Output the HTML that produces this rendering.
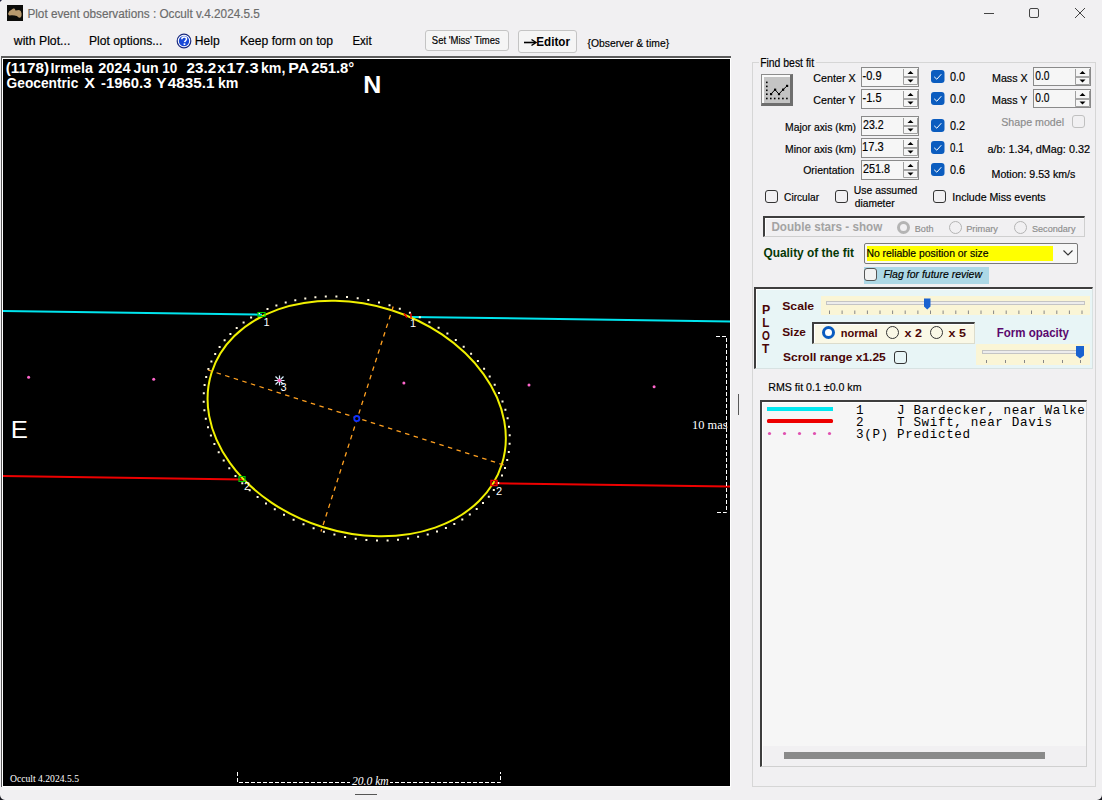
<!DOCTYPE html>
<html><head><meta charset="utf-8">
<style>
html,body{margin:0;padding:0;}
body{width:1102px;height:800px;overflow:hidden;position:relative;background:#f1f0f2;font-family:"Liberation Sans",sans-serif;color:#000;}
.a{position:absolute;}
.bgc{background:#f1f0f2;}
.inp{position:absolute;box-sizing:border-box;width:58px;height:20px;background:#f7f7f7;border:1px solid #7a7a7a;}
.spin{position:absolute;right:1px;top:1px;width:15px;height:16px;background:#ececec;border-left:1px solid #c0c0c0;}
.cb{position:absolute;box-sizing:border-box;width:13px;height:13px;border-radius:3px;}
.cbon{background:#0f5cbf;}
.cboff{border:1px solid #333;background:#f7f7f7;}
</style></head><body>
<!-- title bar -->
<svg class="a" style="left:7px;top:5px" width="16" height="16" viewBox="0 0 16 16">
<rect width="16" height="16" fill="#0c0c0a"/>
<path d="M1 9L2.2 6.3L4.5 4.8L6.2 3.5L7.8 3.8L8.5 5.5L10.2 5.2L12 5L13.8 6L14.6 8.5L14.5 11L13.5 12.5L12 12.8L9.8 11L7.5 10.5L5 10.3L2.2 10.5Z" fill="#b89a6e"/>
</svg>
<svg class="a" style="left:980px;top:4px" width="110" height="20">
<line x1="4" y1="9.5" x2="14" y2="9.5" stroke="#444" stroke-width="1"/>
<rect x="49.5" y="4.5" width="9" height="9" rx="1.5" fill="none" stroke="#444" stroke-width="1"/>
<path d="M95 4L105 14M105 4L95 14" stroke="#444" stroke-width="1"/>
</svg>
<!-- menu bar -->
<svg class="a" style="left:176px;top:33px" width="16" height="16" viewBox="0 0 16 16">
<circle cx="8" cy="8" r="6.8" fill="#fff" stroke="#1a2a80" stroke-width="1.2"/>
<circle cx="8" cy="8" r="5.2" fill="#1848d8"/>
<path d="M5.8 6.3C5.8 4.6 7 3.9 8.2 3.9C9.6 3.9 10.5 4.8 10.5 6C10.5 7.4 8.8 7.8 8.5 9.2" fill="none" stroke="#fff" stroke-width="1.5"/>
<rect x="7.6" y="10.3" width="1.7" height="1.7" fill="#fff"/>
</svg>
<div class="a" style="left:425px;top:30px;width:84px;height:21px;box-sizing:border-box;border:1px solid #c4c4c4;border-radius:3px;background:#f5f5f5;"></div>
<div class="a" style="left:518px;top:30px;width:59px;height:23px;box-sizing:border-box;border:1px solid #c4c4c4;border-radius:3px;background:#f5f5f5;"></div>
<svg class="a" style="left:523px;top:38px" width="15" height="9"><path d="M1 4.5H12" stroke="#000" stroke-width="1.6"/><path d="M8.5 1.5L13 4.5L8.5 7.5" fill="none" stroke="#000" stroke-width="1.5"/></svg>
<svg class="a" style="left:0;top:0" width="1102" height="800"><path d="M0 0H2L0 2Z" fill="#202040"/><path d="M0 800V795Q0.5 799.5 5 800Z" fill="#181820"/><path d="M1102 800V795Q1101.5 799.5 1097 800Z" fill="#181820"/></svg>
<!-- plot frame -->
<div class="a" style="left:1px;top:56px;width:730px;height:2px;background:#5c5c5c;"></div>
<div class="a" style="left:1px;top:56px;width:1px;height:731px;background:#5c5c5c;"></div>
<div class="a" style="left:2px;top:58px;width:729px;height:729px;background:#fff;"></div>
<div class="a" style="left:3px;top:59px;width:727px;height:727px;background:#000;"></div>
<div class="a" style="left:2px;top:787px;width:729px;height:3px;background:#f6f6f6;"></div>
<div class="a" style="left:355px;top:794px;width:22px;height:1px;background:#555;"></div>

<svg class="a" style="left:3px;top:59px" width="727" height="727" viewBox="3 59 727 727">
<g stroke-width="2" fill="none">
<line x1="3" y1="311" x2="262" y2="314.7" stroke="#00e5ee"/>
<line x1="411" y1="316.9" x2="730" y2="321.5" stroke="#00e5ee"/>
<line x1="3" y1="476" x2="243" y2="479.5" stroke="#ee0000"/>
<line x1="494" y1="483.2" x2="730" y2="486.6" stroke="#ee0000"/>
</g>
<ellipse cx="356.7" cy="418.5" rx="152.2" ry="113.8" transform="rotate(17.5 356.7 418.5)" fill="none" stroke="#f0f000" stroke-width="2"/>
<path d="M504.0 467.0h2v2h-2zM501.0 474.6h2v2h-2zM497.2 482.0h2v2h-2zM492.8 489.1h2v2h-2zM487.8 495.8h2v2h-2zM482.0 502.1h2v2h-2zM475.7 508.1h2v2h-2zM468.8 513.5h2v2h-2zM461.3 518.6h2v2h-2zM453.3 523.1h2v2h-2zM444.9 527.1h2v2h-2zM436.0 530.6h2v2h-2zM426.7 533.5h2v2h-2zM417.1 535.8h2v2h-2zM407.1 537.6h2v2h-2zM397.0 538.8h2v2h-2zM386.6 539.4h2v2h-2zM376.0 539.4h2v2h-2zM365.4 538.9h2v2h-2zM354.7 537.7h2v2h-2zM344.1 535.9h2v2h-2zM333.4 533.6h2v2h-2zM322.9 530.7h2v2h-2zM312.6 527.2h2v2h-2zM302.5 523.2h2v2h-2zM292.6 518.7h2v2h-2zM283.0 513.7h2v2h-2zM273.8 508.3h2v2h-2zM265.0 502.4h2v2h-2zM256.6 496.0h2v2h-2zM248.7 489.3h2v2h-2zM241.3 482.3h2v2h-2zM234.5 474.9h2v2h-2zM228.3 467.3h2v2h-2zM222.7 459.4h2v2h-2zM217.7 451.3h2v2h-2zM213.4 443.0h2v2h-2zM209.9 434.6h2v2h-2zM207.0 426.2h2v2h-2zM204.8 417.7h2v2h-2zM203.4 409.2h2v2h-2zM202.7 400.7h2v2h-2zM202.8 392.3h2v2h-2zM203.6 384.0h2v2h-2zM205.2 375.9h2v2h-2zM207.4 368.0h2v2h-2zM210.4 360.4h2v2h-2zM214.2 353.0h2v2h-2zM218.6 345.9h2v2h-2zM223.6 339.2h2v2h-2zM229.4 332.9h2v2h-2zM235.7 326.9h2v2h-2zM242.6 321.5h2v2h-2zM250.1 316.4h2v2h-2zM258.1 311.9h2v2h-2zM266.5 307.9h2v2h-2zM275.4 304.4h2v2h-2zM284.7 301.5h2v2h-2zM294.3 299.2h2v2h-2zM304.3 297.4h2v2h-2zM314.4 296.2h2v2h-2zM324.8 295.6h2v2h-2zM335.4 295.6h2v2h-2zM346.0 296.1h2v2h-2zM356.7 297.3h2v2h-2zM367.3 299.1h2v2h-2zM378.0 301.4h2v2h-2zM388.5 304.3h2v2h-2zM398.8 307.8h2v2h-2zM408.9 311.8h2v2h-2zM418.8 316.3h2v2h-2zM428.4 321.3h2v2h-2zM437.6 326.7h2v2h-2zM446.4 332.6h2v2h-2zM454.8 339.0h2v2h-2zM462.7 345.7h2v2h-2zM470.1 352.7h2v2h-2zM476.9 360.1h2v2h-2zM483.1 367.7h2v2h-2zM488.7 375.6h2v2h-2zM493.7 383.7h2v2h-2zM498.0 392.0h2v2h-2zM501.5 400.4h2v2h-2zM504.4 408.8h2v2h-2zM506.6 417.3h2v2h-2zM508.0 425.8h2v2h-2zM508.7 434.3h2v2h-2zM508.6 442.7h2v2h-2zM507.8 451.0h2v2h-2zM506.2 459.1h2v2h-2z" fill="#fff8e0"/>
<g stroke="#ffa020" stroke-width="1.3" stroke-dasharray="4.5 4.5" fill="none">
<line x1="208" y1="370" x2="505.5" y2="465.5"/>
<line x1="393.2" y1="306.5" x2="321" y2="531.5"/>
</g>
<circle cx="356.8" cy="418.6" r="2.6" fill="#000" stroke="#1030ff" stroke-width="1.8"/>
<circle cx="28.6" cy="377.3" r="1.5" fill="#ff66cc"/>
<circle cx="153.7" cy="379.2" r="1.5" fill="#ff66cc"/>
<circle cx="403.9" cy="383.0" r="1.5" fill="#ff66cc"/>
<circle cx="529.0" cy="384.9" r="1.5" fill="#ff66cc"/>
<circle cx="654.1" cy="386.8" r="1.5" fill="#ff66cc"/>
<g stroke="#d8f0ff" stroke-width="1.5"><path d="M275.5 376.5L283.5 384.5M283.5 376.5L275.5 384.5M279.5 375.5V385.5M274.5 380.5H284.5" stroke-width="1.2"/></g>
<circle cx="279.5" cy="380.5" r="1.8" fill="#ff50b0"/>
<path d="M258 312.5h7v4h-7z" fill="none" stroke="#00cc00" stroke-width="1.2"/>
<path d="M404 313.5l3 4M411 313.5v5" stroke="#ee0000" stroke-width="1.5"/>
<path d="M239 476.5h6v5h-6z" fill="none" stroke="#00cc00" stroke-width="1.2"/>
<path d="M491 480.5h6v5h-6z" fill="none" stroke="#ee0000" stroke-width="1.5"/>
<g font-family="Liberation Sans" font-size="11" fill="#fff">
<text x="263.5" y="326">1</text>
<text x="410" y="326.5">1</text>
<text x="280.5" y="391">3</text>
<text x="244" y="490">2</text>
<text x="496" y="494.5">2</text>
</g>
<path d="M716 336.5H726.5V512.5H716" fill="none" stroke="#fff" stroke-width="1" stroke-dasharray="4 2"/>
<path d="M237.5 772V782.5H500.5V772" fill="none" stroke="#fff" stroke-width="1" stroke-dasharray="4 2"/>
<rect x="350" y="776" width="40" height="9" fill="#000"/>
<rect x="690" y="419" width="36" height="12" fill="#000"/>
</svg>
<div class="a" style="left:738px;top:394px;width:1px;height:21px;background:#5a5a5a;"></div>
<div class="a" style="left:752px;top:62px;width:344px;height:725px;box-sizing:border-box;border:1px solid #d6d6d6;"></div>
<div class="a bgc" style="left:759px;top:56px;width:57px;height:12px;"></div>
<div class="a" style="left:761px;top:74px;width:32px;height:32px;box-sizing:border-box;background:#c4c4c4;border-top:1px solid #8c8c8c;border-left:1px solid #8c8c8c;border-right:3px solid #6e6e6e;border-bottom:3px solid #6e6e6e;box-shadow:inset 2px 2px 0 #fafafa;"></div>
<svg class="a" style="left:761px;top:74px" width="32" height="32"><g fill="#000">
<rect x="5" y="7.6" width="1.6" height="1.6"/>
<rect x="5" y="11.6" width="1.6" height="1.6"/>
<rect x="5" y="15.5" width="1.6" height="1.6"/>
<rect x="5" y="19.4" width="1.6" height="1.6"/>
<rect x="5.0" y="23.7" width="1.6" height="1.6"/>
<rect x="9.0" y="23.7" width="1.6" height="1.6"/>
<rect x="12.9" y="23.7" width="1.6" height="1.6"/>
<rect x="17.0" y="23.7" width="1.6" height="1.6"/>
<rect x="21.1" y="23.7" width="1.6" height="1.6"/>
<rect x="25.1" y="23.7" width="1.6" height="1.6"/>
</g><path d="M10 20L14 15.7L17.9 20L22 15.7L26 11.9" fill="none" stroke="#000" stroke-width="1"/>
<g fill="#000"><rect x="9" y="19" width="2.2" height="2.2"/><rect x="13" y="14.6" width="2.2" height="2.2"/><rect x="16.9" y="19" width="2.2" height="2.2"/><rect x="21" y="14.6" width="2.2" height="2.2"/><rect x="25" y="10.8" width="2.2" height="2.2"/></g></svg>
<div class="a" style="left:861px;top:67px;width:58px;height:20px;box-sizing:border-box;background:#f6f6f6;border:1px solid #8a8a8a;"></div>
<svg class="a" style="left:903px;top:69px" width="15" height="17">
<path d="M0.5 0V15.5H14.5V0" fill="none" stroke="#a0a0a0" stroke-width="1"/>
<rect x="1" y="7" width="13" height="2" fill="#a8a8a8"/>
<path d="M4.5 5L7.5 2L10.5 5Z" fill="#000"/><path d="M4.5 10.5H10.5L7.5 13.5Z" fill="#000"/>
</svg>
<div class="a" style="left:861px;top:89px;width:58px;height:20px;box-sizing:border-box;background:#f6f6f6;border:1px solid #8a8a8a;"></div>
<svg class="a" style="left:903px;top:91px" width="15" height="17">
<path d="M0.5 0V15.5H14.5V0" fill="none" stroke="#a0a0a0" stroke-width="1"/>
<rect x="1" y="7" width="13" height="2" fill="#a8a8a8"/>
<path d="M4.5 5L7.5 2L10.5 5Z" fill="#000"/><path d="M4.5 10.5H10.5L7.5 13.5Z" fill="#000"/>
</svg>
<div class="a" style="left:861px;top:116px;width:58px;height:20px;box-sizing:border-box;background:#f6f6f6;border:1px solid #8a8a8a;"></div>
<svg class="a" style="left:903px;top:118px" width="15" height="17">
<path d="M0.5 0V15.5H14.5V0" fill="none" stroke="#a0a0a0" stroke-width="1"/>
<rect x="1" y="7" width="13" height="2" fill="#a8a8a8"/>
<path d="M4.5 5L7.5 2L10.5 5Z" fill="#000"/><path d="M4.5 10.5H10.5L7.5 13.5Z" fill="#000"/>
</svg>
<div class="a" style="left:861px;top:138px;width:58px;height:20px;box-sizing:border-box;background:#f6f6f6;border:1px solid #8a8a8a;"></div>
<svg class="a" style="left:903px;top:140px" width="15" height="17">
<path d="M0.5 0V15.5H14.5V0" fill="none" stroke="#a0a0a0" stroke-width="1"/>
<rect x="1" y="7" width="13" height="2" fill="#a8a8a8"/>
<path d="M4.5 5L7.5 2L10.5 5Z" fill="#000"/><path d="M4.5 10.5H10.5L7.5 13.5Z" fill="#000"/>
</svg>
<div class="a" style="left:861px;top:160px;width:58px;height:20px;box-sizing:border-box;background:#f6f6f6;border:1px solid #8a8a8a;"></div>
<svg class="a" style="left:903px;top:162px" width="15" height="17">
<path d="M0.5 0V15.5H14.5V0" fill="none" stroke="#a0a0a0" stroke-width="1"/>
<rect x="1" y="7" width="13" height="2" fill="#a8a8a8"/>
<path d="M4.5 5L7.5 2L10.5 5Z" fill="#000"/><path d="M4.5 10.5H10.5L7.5 13.5Z" fill="#000"/>
</svg>
<div class="a" style="left:1033px;top:67px;width:58px;height:19px;box-sizing:border-box;background:#f6f6f6;border:1px solid #8a8a8a;"></div>
<svg class="a" style="left:1075px;top:69px" width="15" height="17">
<path d="M0.5 0V15.5H14.5V0" fill="none" stroke="#a0a0a0" stroke-width="1"/>
<rect x="1" y="7" width="13" height="2" fill="#a8a8a8"/>
<path d="M4.5 5L7.5 2L10.5 5Z" fill="#000"/><path d="M4.5 10.5H10.5L7.5 13.5Z" fill="#000"/>
</svg>
<div class="a" style="left:1033px;top:89px;width:58px;height:19px;box-sizing:border-box;background:#f6f6f6;border:1px solid #8a8a8a;"></div>
<svg class="a" style="left:1075px;top:91px" width="15" height="17">
<path d="M0.5 0V15.5H14.5V0" fill="none" stroke="#a0a0a0" stroke-width="1"/>
<rect x="1" y="7" width="13" height="2" fill="#a8a8a8"/>
<path d="M4.5 5L7.5 2L10.5 5Z" fill="#000"/><path d="M4.5 10.5H10.5L7.5 13.5Z" fill="#000"/>
</svg>
<svg class="a" style="left:931px;top:70px" width="14" height="14"><rect x="0" y="0" width="13.5" height="13" rx="3" fill="#0b5cbf"/><path d="M3.2 6.8L5.8 9.2L10.3 4.2" fill="none" stroke="#fff" stroke-width="1"/></svg>
<svg class="a" style="left:931px;top:92px" width="14" height="14"><rect x="0" y="0" width="13.5" height="13" rx="3" fill="#0b5cbf"/><path d="M3.2 6.8L5.8 9.2L10.3 4.2" fill="none" stroke="#fff" stroke-width="1"/></svg>
<svg class="a" style="left:931px;top:119px" width="14" height="14"><rect x="0" y="0" width="13.5" height="13" rx="3" fill="#0b5cbf"/><path d="M3.2 6.8L5.8 9.2L10.3 4.2" fill="none" stroke="#fff" stroke-width="1"/></svg>
<svg class="a" style="left:931px;top:141px" width="14" height="14"><rect x="0" y="0" width="13.5" height="13" rx="3" fill="#0b5cbf"/><path d="M3.2 6.8L5.8 9.2L10.3 4.2" fill="none" stroke="#fff" stroke-width="1"/></svg>
<svg class="a" style="left:931px;top:163px" width="14" height="14"><rect x="0" y="0" width="13.5" height="13" rx="3" fill="#0b5cbf"/><path d="M3.2 6.8L5.8 9.2L10.3 4.2" fill="none" stroke="#fff" stroke-width="1"/></svg>
<div class="a" style="left:1072px;top:115px;width:13px;height:13px;box-sizing:border-box;border:1px solid #c0c0c0;border-radius:3px;"></div>
<div class="a" style="left:765px;top:190px;width:13px;height:13px;box-sizing:border-box;border:1px solid #333;border-radius:3px;"></div>
<div class="a" style="left:835px;top:190px;width:13px;height:13px;box-sizing:border-box;border:1px solid #333;border-radius:3px;"></div>
<div class="a" style="left:933px;top:190px;width:13px;height:13px;box-sizing:border-box;border:1px solid #333;border-radius:3px;"></div>
<div class="a" style="left:763px;top:216px;width:322px;height:21px;box-sizing:border-box;border-top:2px solid #3e3e3e;border-left:2px solid #3e3e3e;border-right:1px solid #cfcfcf;border-bottom:1px solid #cfcfcf;box-shadow:inset 1px 1px 0 #fff;"></div>
<div class="a" style="left:897px;top:221px;width:13px;height:13px;box-sizing:border-box;border-radius:50%;border:3.5px solid #b4b4b4;"></div>
<div class="a" style="left:949px;top:221px;width:13px;height:13px;box-sizing:border-box;border-radius:50%;border:1px solid #b4b4b4;"></div>
<div class="a" style="left:1014px;top:221px;width:13px;height:13px;box-sizing:border-box;border-radius:50%;border:1px solid #b4b4b4;"></div>
<div class="a" style="left:864px;top:243px;width:214px;height:21px;box-sizing:border-box;border:1px solid #7a7a7a;border-radius:2px;background:#f7f7f7;"></div>
<div class="a" style="left:867px;top:246px;width:186px;height:15px;background:#ffff00;"></div>
<svg class="a" style="left:1062px;top:249px" width="12" height="8"><path d="M1.5 1.5L6 6L10.5 1.5" fill="none" stroke="#333" stroke-width="1.1"/></svg>
<div class="a" style="left:864px;top:267px;width:125px;height:17px;background:#add8e6;"></div>
<div class="a" style="left:864px;top:268px;width:13px;height:13px;box-sizing:border-box;border:1px solid #555;border-radius:3px;background:#f2f2f2;"></div>
<div class="a" style="left:754px;top:287px;width:339px;height:82px;box-sizing:border-box;border-top:2px solid #3e3e3e;border-left:2px solid #3e3e3e;border-right:1px solid #d8e2e2;border-bottom:1px solid #d8e2e2;box-shadow:inset 1px 1px 0 #fff;background:#e8f5f6;"></div>
<div class="a" style="left:821px;top:296px;width:269px;height:19px;background:#faf5d6;"></div>
<div class="a" style="left:826px;top:301px;width:259px;height:4px;box-sizing:border-box;border:1px solid #c4c4c4;background:#ececec;"></div>
<svg class="a" style="left:821px;top:296px" width="269" height="19">
<path d="M103 2.5h6.5v8l-3.25 3l-3.25-3z" fill="#1a62d0"/><g stroke="#888" stroke-width="1"><path d="
M8.5 14.5v3.5M21.1 14.5v3.5M33.8 14.5v3.5M46.4 14.5v3.5M59.0 14.5v3.5M71.6 14.5v3.5M84.2 14.5v3.5M96.9 14.5v3.5M109.5 14.5v3.5M122.1 14.5v3.5M134.8 14.5v3.5M147.4 14.5v3.5M160.0 14.5v3.5M172.6 14.5v3.5M185.2 14.5v3.5M197.9 14.5v3.5M210.5 14.5v3.5M223.1 14.5v3.5M235.8 14.5v3.5M248.4 14.5v3.5M261.0 14.5v3.5"/></g></svg>
<div class="a" style="left:812px;top:322px;width:163px;height:22px;box-sizing:border-box;border-top:2px solid #3e3e3e;border-left:2px solid #3e3e3e;border-right:1px solid #dcdccc;border-bottom:1px solid #dcdccc;box-shadow:inset 1px 1px 0 #fff;background:#faf8e6;"></div>
<div class="a" style="left:822px;top:326px;width:13px;height:13px;box-sizing:border-box;border-radius:50%;border:3.5px solid #0a5cc0;background:#fff;"></div>
<div class="a" style="left:886px;top:326px;width:13px;height:13px;box-sizing:border-box;border-radius:50%;border:1px solid #333;"></div>
<div class="a" style="left:930px;top:326px;width:13px;height:13px;box-sizing:border-box;border-radius:50%;border:1px solid #333;"></div>
<div class="a" style="left:976px;top:344px;width:114px;height:21px;background:#faf5d6;"></div>
<div class="a" style="left:982px;top:350px;width:100px;height:4px;box-sizing:border-box;border:1px solid #c4c4c4;background:#ececec;"></div>
<svg class="a" style="left:976px;top:344px" width="114" height="21"><path d="M100 2h8v9.5l-4 3l-4-3z" fill="#1a62d0"/>
<g stroke="#888" stroke-width="1"><path d="M10.5 16v3M29.5 16v3M48.5 16v3M67.5 16v3M86.5 16v3M104.5 16v3"/></g></svg>
<div class="a" style="left:894px;top:351px;width:13px;height:13px;box-sizing:border-box;border:1px solid #333;border-radius:3px;"></div>
<div class="a" style="left:760px;top:400px;width:327px;height:367px;box-sizing:border-box;border-top:2px solid #3e3e3e;border-left:2px solid #3e3e3e;border-right:1px solid #d0d0d0;border-bottom:1px solid #d0d0d0;box-shadow:inset 1px 1px 0 #fff;"></div>
<div class="a" style="left:763px;top:403px;width:323px;height:343px;background:#f6f6f6;overflow:hidden;">
<div class="a" style="left:4px;top:4px;width:66px;height:4px;background:#00e8f0;"></div>
<div class="a" style="left:4px;top:16px;width:66px;height:4px;background:#ee0000;border-radius:1.5px;"></div>
<svg class="a" style="left:4px;top:28px" width="70" height="6"><g fill="#e050b0"><circle cx="2.5" cy="2.5" r="1.6"/><circle cx="17.5" cy="2.5" r="1.6"/><circle cx="32.5" cy="2.5" r="1.6"/><circle cx="47.5" cy="2.5" r="1.6"/><circle cx="62.5" cy="2.5" r="1.6"/></g></svg>
<pre class="a" style="margin:0;left:93px;top:2px;font-family:'Liberation Mono',monospace;font-size:12.6px;letter-spacing:0.64px;line-height:12px;color:#000;">1    J Bardecker, near Walker
2    T Swift, near Davis
3(P) Predicted</pre>
</div>
<div class="a" style="left:784px;top:752px;width:261px;height:7px;background:#8a8a8a;"></div>
<svg class="a" style="left:0;top:0" width="1102" height="800">
<text x="27.40" y="17.70" font-family="Liberation Sans" font-size="12" font-weight="normal" font-style="normal" fill="#6b6b6b" stroke="#6b6b6b" stroke-width="0.18" xml:space="preserve" textLength="232.46" lengthAdjust="spacingAndGlyphs">Plot event observations : Occult v.4.2024.5.5</text>
<text x="13.79" y="45.00" font-family="Liberation Sans" font-size="12" font-weight="normal" font-style="normal" fill="#000" stroke="#000" stroke-width="0.18" xml:space="preserve" textLength="56.51" lengthAdjust="spacingAndGlyphs">with Plot...</text>
<text x="88.99" y="45.00" font-family="Liberation Sans" font-size="12" font-weight="normal" font-style="normal" fill="#000" stroke="#000" stroke-width="0.18" xml:space="preserve" textLength="73.34" lengthAdjust="spacingAndGlyphs">Plot options...</text>
<text x="194.77" y="45.00" font-family="Liberation Sans" font-size="12" font-weight="normal" font-style="normal" fill="#000" stroke="#000" stroke-width="0.18" xml:space="preserve" textLength="24.85" lengthAdjust="spacingAndGlyphs">Help</text>
<text x="239.99" y="45.00" font-family="Liberation Sans" font-size="12" font-weight="normal" font-style="normal" fill="#000" stroke="#000" stroke-width="0.18" xml:space="preserve" textLength="93.07" lengthAdjust="spacingAndGlyphs">Keep form on top</text>
<text x="352.39" y="45.00" font-family="Liberation Sans" font-size="12" font-weight="normal" font-style="normal" fill="#000" stroke="#000" stroke-width="0.18" xml:space="preserve" textLength="19.24" lengthAdjust="spacingAndGlyphs">Exit</text>
<text x="431.87" y="43.90" font-family="Liberation Sans" font-size="10.5" font-weight="normal" font-style="normal" fill="#000" stroke="#000" stroke-width="0.18" xml:space="preserve" textLength="67.88" lengthAdjust="spacingAndGlyphs">Set 'Miss' Times</text>
<text x="536.30" y="45.80" font-family="Liberation Sans" font-size="12.8" font-weight="bold" font-style="normal" fill="#000" xml:space="preserve" textLength="33.61" lengthAdjust="spacingAndGlyphs">Editor</text>
<text x="587.44" y="46.90" font-family="Liberation Sans" font-size="11.5" font-weight="normal" font-style="normal" fill="#000" stroke="#000" stroke-width="0.18" xml:space="preserve" textLength="81.69" lengthAdjust="spacingAndGlyphs">{Observer &amp; time}</text>
<text x="760.13" y="66.70" font-family="Liberation Sans" font-size="12" font-weight="normal" font-style="normal" fill="#000" stroke="#000" stroke-width="0.18" xml:space="preserve" textLength="53.90" lengthAdjust="spacingAndGlyphs">Find best fit</text>
<text x="813.21" y="81.50" font-family="Liberation Sans" font-size="11.8" font-weight="normal" font-style="normal" fill="#000" stroke="#000" stroke-width="0.18" xml:space="preserve" textLength="42.42" lengthAdjust="spacingAndGlyphs">Center X</text>
<text x="813.21" y="103.60" font-family="Liberation Sans" font-size="11.8" font-weight="normal" font-style="normal" fill="#000" stroke="#000" stroke-width="0.18" xml:space="preserve" textLength="42.22" lengthAdjust="spacingAndGlyphs">Center Y</text>
<text x="785.05" y="130.60" font-family="Liberation Sans" font-size="11.8" font-weight="normal" font-style="normal" fill="#000" stroke="#000" stroke-width="0.18" xml:space="preserve" textLength="70.96" lengthAdjust="spacingAndGlyphs">Major axis (km)</text>
<text x="785.05" y="152.70" font-family="Liberation Sans" font-size="11.8" font-weight="normal" font-style="normal" fill="#000" stroke="#000" stroke-width="0.18" xml:space="preserve" textLength="70.96" lengthAdjust="spacingAndGlyphs">Minor axis (km)</text>
<text x="803.22" y="173.50" font-family="Liberation Sans" font-size="11.8" font-weight="normal" font-style="normal" fill="#000" stroke="#000" stroke-width="0.18" xml:space="preserve" textLength="51.24" lengthAdjust="spacingAndGlyphs">Orientation</text>
<text x="862.61" y="79.80" font-family="Liberation Sans" font-size="12" font-weight="normal" font-style="normal" fill="#000" stroke="#000" stroke-width="0.18" xml:space="preserve" textLength="18.93" lengthAdjust="spacingAndGlyphs">-0.9</text>
<text x="862.61" y="102.00" font-family="Liberation Sans" font-size="12" font-weight="normal" font-style="normal" fill="#000" stroke="#000" stroke-width="0.18" xml:space="preserve" textLength="18.93" lengthAdjust="spacingAndGlyphs">-1.5</text>
<text x="863.06" y="129.00" font-family="Liberation Sans" font-size="12" font-weight="normal" font-style="normal" fill="#000" stroke="#000" stroke-width="0.18" xml:space="preserve" textLength="20.68" lengthAdjust="spacingAndGlyphs">23.2</text>
<text x="862.07" y="151.00" font-family="Liberation Sans" font-size="12" font-weight="normal" font-style="normal" fill="#000" stroke="#000" stroke-width="0.18" xml:space="preserve" textLength="21.67" lengthAdjust="spacingAndGlyphs">17.3</text>
<text x="863.08" y="173.00" font-family="Liberation Sans" font-size="12" font-weight="normal" font-style="normal" fill="#000" stroke="#000" stroke-width="0.18" xml:space="preserve" textLength="27.04" lengthAdjust="spacingAndGlyphs">251.8</text>
<text x="1035.28" y="80.30" font-family="Liberation Sans" font-size="12" font-weight="normal" font-style="normal" fill="#000" stroke="#000" stroke-width="0.18" xml:space="preserve" textLength="14.22" lengthAdjust="spacingAndGlyphs">0.0</text>
<text x="1035.28" y="102.00" font-family="Liberation Sans" font-size="12" font-weight="normal" font-style="normal" fill="#000" stroke="#000" stroke-width="0.18" xml:space="preserve" textLength="14.22" lengthAdjust="spacingAndGlyphs">0.0</text>
<text x="950.00" y="81.00" font-family="Liberation Sans" font-size="13" font-weight="normal" font-style="normal" fill="#000" stroke="#000" stroke-width="0.18" xml:space="preserve" textLength="15.07" lengthAdjust="spacingAndGlyphs">0.0</text>
<text x="950.00" y="103.00" font-family="Liberation Sans" font-size="13" font-weight="normal" font-style="normal" fill="#000" stroke="#000" stroke-width="0.18" xml:space="preserve" textLength="15.07" lengthAdjust="spacingAndGlyphs">0.0</text>
<text x="950.00" y="130.20" font-family="Liberation Sans" font-size="13" font-weight="normal" font-style="normal" fill="#000" stroke="#000" stroke-width="0.18" xml:space="preserve" textLength="15.07" lengthAdjust="spacingAndGlyphs">0.2</text>
<text x="950.00" y="152.00" font-family="Liberation Sans" font-size="13" font-weight="normal" font-style="normal" fill="#000" stroke="#000" stroke-width="0.18" xml:space="preserve" textLength="13.58" lengthAdjust="spacingAndGlyphs">0.1</text>
<text x="950.00" y="174.30" font-family="Liberation Sans" font-size="13" font-weight="normal" font-style="normal" fill="#000" stroke="#000" stroke-width="0.18" xml:space="preserve" textLength="15.07" lengthAdjust="spacingAndGlyphs">0.6</text>
<text x="992.00" y="82.00" font-family="Liberation Sans" font-size="11" font-weight="normal" font-style="normal" fill="#000" stroke="#000" stroke-width="0.18" xml:space="preserve" textLength="35.70" lengthAdjust="spacingAndGlyphs">Mass X</text>
<text x="992.00" y="104.00" font-family="Liberation Sans" font-size="11" font-weight="normal" font-style="normal" fill="#000" stroke="#000" stroke-width="0.18" xml:space="preserve" textLength="35.50" lengthAdjust="spacingAndGlyphs">Mass Y</text>
<text x="1001.26" y="125.50" font-family="Liberation Sans" font-size="11.8" font-weight="normal" font-style="normal" fill="#8c8c8c" stroke="#8c8c8c" stroke-width="0.18" xml:space="preserve" textLength="62.79" lengthAdjust="spacingAndGlyphs">Shape model</text>
<text x="987.40" y="152.90" font-family="Liberation Sans" font-size="10.5" font-weight="normal" font-style="normal" fill="#000" stroke="#000" stroke-width="0.18" xml:space="preserve" textLength="102.66" lengthAdjust="spacingAndGlyphs">a/b: 1.34, dMag: 0.32</text>
<text x="991.59" y="177.70" font-family="Liberation Sans" font-size="10.5" font-weight="normal" font-style="normal" fill="#000" stroke="#000" stroke-width="0.18" xml:space="preserve" textLength="83.79" lengthAdjust="spacingAndGlyphs">Motion: 9.53 km/s</text>
<text x="784.09" y="201.20" font-family="Liberation Sans" font-size="11.5" font-weight="normal" font-style="normal" fill="#000" stroke="#000" stroke-width="0.18" xml:space="preserve" textLength="34.98" lengthAdjust="spacingAndGlyphs">Circular</text>
<text x="853.80" y="194.20" font-family="Liberation Sans" font-size="10.5" font-weight="normal" font-style="normal" fill="#000" stroke="#000" stroke-width="0.18" xml:space="preserve" textLength="63.60" lengthAdjust="spacingAndGlyphs">Use assumed</text>
<text x="854.80" y="206.70" font-family="Liberation Sans" font-size="10.5" font-weight="normal" font-style="normal" fill="#000" stroke="#000" stroke-width="0.18" xml:space="preserve" textLength="39.75" lengthAdjust="spacingAndGlyphs">diameter</text>
<text x="952.29" y="201.20" font-family="Liberation Sans" font-size="11.5" font-weight="normal" font-style="normal" fill="#000" stroke="#000" stroke-width="0.18" xml:space="preserve" textLength="93.36" lengthAdjust="spacingAndGlyphs">Include Miss events</text>
<text x="771.42" y="230.90" font-family="Liberation Sans" font-size="12.5" font-weight="bold" font-style="normal" fill="#a3a3a3" xml:space="preserve" textLength="110.80" lengthAdjust="spacingAndGlyphs">Double stars - show</text>
<text x="914.81" y="231.80" font-family="Liberation Sans" font-size="9.5" font-weight="normal" font-style="normal" fill="#8f8f8f" stroke="#8f8f8f" stroke-width="0.18" xml:space="preserve" textLength="18.64" lengthAdjust="spacingAndGlyphs">Both</text>
<text x="966.22" y="231.80" font-family="Liberation Sans" font-size="9.5" font-weight="normal" font-style="normal" fill="#8f8f8f" stroke="#8f8f8f" stroke-width="0.18" xml:space="preserve" textLength="31.71" lengthAdjust="spacingAndGlyphs">Primary</text>
<text x="1032.01" y="231.80" font-family="Liberation Sans" font-size="9.5" font-weight="normal" font-style="normal" fill="#8f8f8f" stroke="#8f8f8f" stroke-width="0.18" xml:space="preserve" textLength="43.43" lengthAdjust="spacingAndGlyphs">Secondary</text>
<text x="763.38" y="257.20" font-family="Liberation Sans" font-size="12" font-weight="bold" font-style="normal" fill="#063806" xml:space="preserve" textLength="90.58" lengthAdjust="spacingAndGlyphs">Quality of the fit</text>
<text x="866.42" y="256.50" font-family="Liberation Sans" font-size="11" font-weight="normal" font-style="normal" fill="#000" stroke="#000" stroke-width="0.18" xml:space="preserve" textLength="122.06" lengthAdjust="spacingAndGlyphs">No reliable position or size</text>
<text x="883.38" y="278.10" font-family="Liberation Sans" font-size="11.5" font-weight="normal" font-style="italic" fill="#000" stroke="#000" stroke-width="0.18" xml:space="preserve" textLength="98.62" lengthAdjust="spacingAndGlyphs">Flag for future review</text>
<text x="762.00" y="313.50" font-family="Liberation Sans" font-size="12.3" font-weight="bold" font-style="normal" fill="#4a0606" xml:space="preserve" textLength="8.20" lengthAdjust="spacingAndGlyphs">P</text>
<text x="762.19" y="326.50" font-family="Liberation Sans" font-size="12.3" font-weight="bold" font-style="normal" fill="#4a0606" xml:space="preserve" textLength="7.11" lengthAdjust="spacingAndGlyphs">L</text>
<text x="762.00" y="339.50" font-family="Liberation Sans" font-size="12.3" font-weight="bold" font-style="normal" fill="#4a0606" xml:space="preserve" textLength="7.89" lengthAdjust="spacingAndGlyphs">O</text>
<text x="762.11" y="352.50" font-family="Liberation Sans" font-size="12.3" font-weight="bold" font-style="normal" fill="#4a0606" xml:space="preserve" textLength="7.31" lengthAdjust="spacingAndGlyphs">T</text>
<text x="782.19" y="309.50" font-family="Liberation Sans" font-size="11.8" font-weight="bold" font-style="normal" fill="#4a0606" xml:space="preserve" textLength="31.99" lengthAdjust="spacingAndGlyphs">Scale</text>
<text x="782.19" y="335.50" font-family="Liberation Sans" font-size="11.8" font-weight="bold" font-style="normal" fill="#4a0606" xml:space="preserve" textLength="23.73" lengthAdjust="spacingAndGlyphs">Size</text>
<text x="840.65" y="336.80" font-family="Liberation Sans" font-size="11.8" font-weight="bold" font-style="normal" fill="#4a0606" xml:space="preserve" textLength="36.87" lengthAdjust="spacingAndGlyphs">normal</text>
<text x="904.59" y="336.80" font-family="Liberation Sans" font-size="11.8" font-weight="bold" font-style="normal" fill="#4a0606" xml:space="preserve" textLength="17.43" lengthAdjust="spacingAndGlyphs">x 2</text>
<text x="948.60" y="336.80" font-family="Liberation Sans" font-size="11.8" font-weight="bold" font-style="normal" fill="#4a0606" xml:space="preserve" textLength="17.35" lengthAdjust="spacingAndGlyphs">x 5</text>
<text x="996.81" y="336.60" font-family="Liberation Sans" font-size="12.3" font-weight="bold" font-style="normal" fill="#5a086e" xml:space="preserve" textLength="72.22" lengthAdjust="spacingAndGlyphs">Form opacity</text>
<text x="782.99" y="361.20" font-family="Liberation Sans" font-size="11.8" font-weight="bold" font-style="normal" fill="#4a0606" xml:space="preserve" textLength="102.81" lengthAdjust="spacingAndGlyphs">Scroll range x1.25</text>
<text x="768.28" y="390.90" font-family="Liberation Sans" font-size="11.5" font-weight="normal" font-style="normal" fill="#000" stroke="#000" stroke-width="0.18" xml:space="preserve" textLength="93.28" lengthAdjust="spacingAndGlyphs">RMS fit 0.1 ±0.0 km</text>
<text x="363.17" y="92.90" font-family="Liberation Sans" font-size="24.5" font-weight="bold" font-style="normal" fill="#fff" xml:space="preserve" textLength="18.06" lengthAdjust="spacingAndGlyphs">N</text>
<text x="10.66" y="437.90" font-family="Liberation Sans" font-size="24.5" font-weight="normal" font-style="normal" fill="#fff" xml:space="preserve" textLength="17.14" lengthAdjust="spacingAndGlyphs">E</text>
<text x="692.12" y="429.30" font-family="Liberation Serif" font-size="12" font-weight="normal" font-style="normal" fill="#fff" xml:space="preserve" textLength="35.45" lengthAdjust="spacingAndGlyphs">10 mas</text>
<text x="352.00" y="784.90" font-family="Liberation Serif" font-size="12" font-weight="normal" font-style="italic" fill="#fff" xml:space="preserve" textLength="36.69" lengthAdjust="spacingAndGlyphs">20.0 km</text>
<text x="10.00" y="781.90" font-family="Liberation Serif" font-size="10" font-weight="normal" font-style="normal" fill="#fff" xml:space="preserve" textLength="68.95" lengthAdjust="spacingAndGlyphs">Occult 4.2024.5.5</text>
<text x="5.72" y="72.80" font-family="Liberation Sans" font-size="13.8" font-weight="bold" font-style="normal" fill="#fff" xml:space="preserve" textLength="43.24" lengthAdjust="spacingAndGlyphs">(1178)</text>
<text x="50.55" y="72.80" font-family="Liberation Sans" font-size="13.8" font-weight="bold" font-style="normal" fill="#fff" xml:space="preserve" textLength="42.40" lengthAdjust="spacingAndGlyphs">Irmela</text>
<text x="98.18" y="72.80" font-family="Liberation Sans" font-size="13.8" font-weight="bold" font-style="normal" fill="#fff" xml:space="preserve" textLength="32.41" lengthAdjust="spacingAndGlyphs">2024</text>
<text x="133.60" y="72.80" font-family="Liberation Sans" font-size="13.8" font-weight="bold" font-style="normal" fill="#fff" xml:space="preserve" textLength="25.05" lengthAdjust="spacingAndGlyphs">Jun</text>
<text x="162.16" y="72.80" font-family="Liberation Sans" font-size="13.8" font-weight="bold" font-style="normal" fill="#fff" xml:space="preserve" textLength="15.02" lengthAdjust="spacingAndGlyphs">10</text>
<text x="186.53" y="72.80" font-family="Liberation Sans" font-size="13.8" font-weight="bold" font-style="normal" fill="#fff" xml:space="preserve" textLength="29.65" lengthAdjust="spacingAndGlyphs">23.2</text>
<text x="217.15" y="72.80" font-family="Liberation Sans" font-size="13.8" font-weight="bold" font-style="normal" fill="#fff" xml:space="preserve" textLength="8.61" lengthAdjust="spacingAndGlyphs">x</text>
<text x="226.47" y="72.80" font-family="Liberation Sans" font-size="13.8" font-weight="bold" font-style="normal" fill="#fff" xml:space="preserve" textLength="32.14" lengthAdjust="spacingAndGlyphs">17.3</text>
<text x="260.95" y="72.80" font-family="Liberation Sans" font-size="13.8" font-weight="bold" font-style="normal" fill="#fff" xml:space="preserve" textLength="24.40" lengthAdjust="spacingAndGlyphs">km,</text>
<text x="288.25" y="72.80" font-family="Liberation Sans" font-size="13.8" font-weight="bold" font-style="normal" fill="#fff" xml:space="preserve" textLength="20.96" lengthAdjust="spacingAndGlyphs">PA</text>
<text x="311.18" y="72.80" font-family="Liberation Sans" font-size="13.8" font-weight="bold" font-style="normal" fill="#fff" xml:space="preserve" textLength="43.13" lengthAdjust="spacingAndGlyphs">251.8°</text>
<text x="6.60" y="88.40" font-family="Liberation Sans" font-size="13.8" font-weight="bold" font-style="normal" fill="#fff" xml:space="preserve" textLength="71.68" lengthAdjust="spacingAndGlyphs">Geocentric</text>
<text x="84.35" y="88.40" font-family="Liberation Sans" font-size="13.8" font-weight="bold" font-style="normal" fill="#fff" xml:space="preserve" textLength="10.76" lengthAdjust="spacingAndGlyphs">X</text>
<text x="101.14" y="88.40" font-family="Liberation Sans" font-size="13.8" font-weight="bold" font-style="normal" fill="#fff" xml:space="preserve" textLength="50.26" lengthAdjust="spacingAndGlyphs">-1960.3</text>
<text x="156.15" y="88.40" font-family="Liberation Sans" font-size="13.8" font-weight="bold" font-style="normal" fill="#fff" xml:space="preserve" textLength="10.35" lengthAdjust="spacingAndGlyphs">Y</text>
<text x="167.81" y="88.40" font-family="Liberation Sans" font-size="13.8" font-weight="bold" font-style="normal" fill="#fff" xml:space="preserve" textLength="46.64" lengthAdjust="spacingAndGlyphs">4835.1</text>
<text x="217.97" y="88.40" font-family="Liberation Sans" font-size="13.8" font-weight="bold" font-style="normal" fill="#fff" xml:space="preserve" textLength="20.52" lengthAdjust="spacingAndGlyphs">km</text>
</svg>
</body></html>
